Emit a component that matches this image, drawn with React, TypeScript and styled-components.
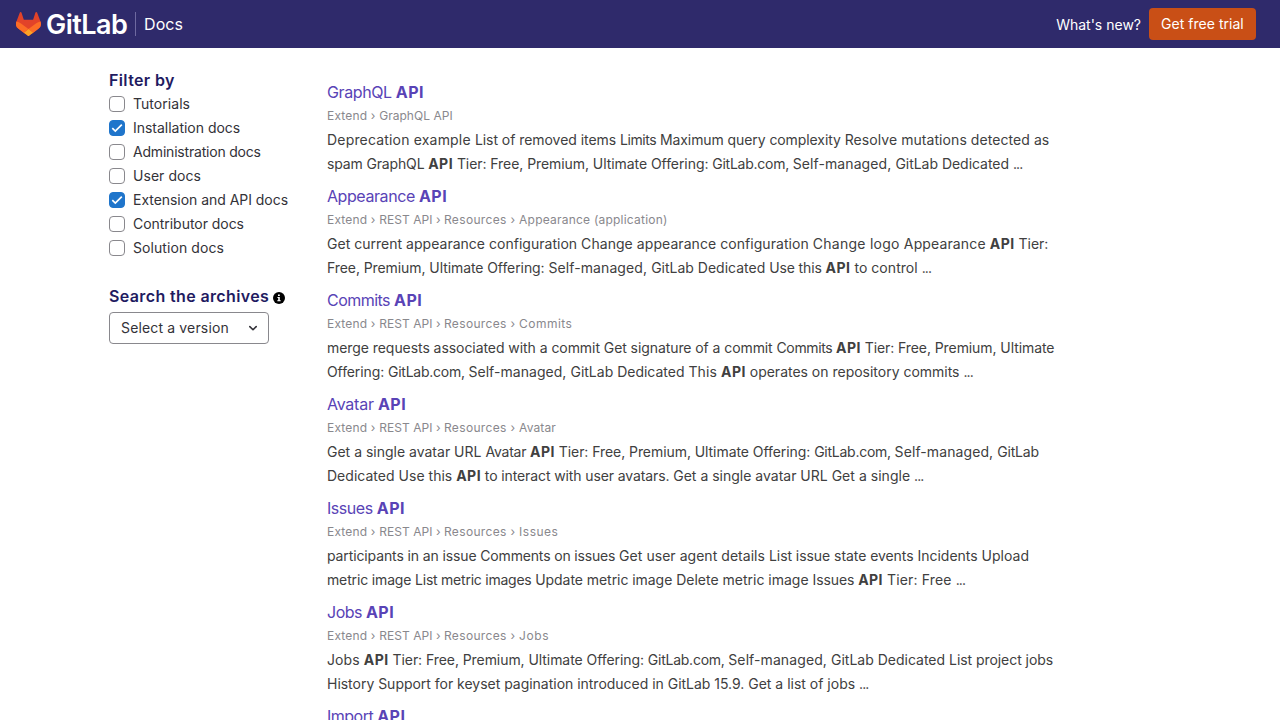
import React, { useState } from "react";
import styled, { createGlobalStyle } from "styled-components";

const GlobalStyle = createGlobalStyle`
  *, *::before, *::after { box-sizing: border-box; }
  html, body { margin: 0; height: 100%; overflow: hidden; }
  body {
    background: #fff;
    color: #333238;
    font-family: Inter, "Noto Sans", sans-serif;
    font-size: 14px;
    line-height: 24px;
  }
`;

const Header = styled.header`
  display: flex;
  align-items: center;
  justify-content: space-between;
  height: 48px;
  padding: 0 24px 0 16px;
  background: #2f2a6b;
  color: #fff;
`;

const Brand = styled.a`
  display: flex;
  align-items: center;
  height: 24px;
  color: #fff;
  text-decoration: none;
`;

const Wordmark = styled.span`
  width: 84px;
  margin: 2px 0 0 5px;
  font-size: 27px;
  font-weight: 600;
  letter-spacing: -0.55px;
  line-height: 24px;
  white-space: nowrap;
`;

const SiteName = styled.span`
  height: 24px;
  margin-left: 5px;
  padding-left: 8px;
  border-left: 1px solid #6e69a0;
  font-size: 16px;
  letter-spacing: 0.1px;
`;

const HeaderNav = styled.nav`
  display: flex;
  align-items: center;
  gap: 8px;
`;

const NavLink = styled.a`
  padding-top: 1px;
  color: #fff;
  text-decoration: none;
`;

const TrialButton = styled.a`
  width: 107px;
  height: 32px;
  padding: 4px 0 4px 12px;
  border-radius: 4px;
  background: #c94f16;
  color: #fff;
  letter-spacing: 0.03px;
  text-decoration: none;
  white-space: nowrap;
`;

const Page = styled.div`
  display: flex;
  padding: 20px 109px 0;
`;

const Sidebar = styled.aside`
  flex: 0 0 218px;
`;

const SidebarHeading = styled.h2`
  display: flex;
  align-items: center;
  gap: 4px;
  margin: 0;
  color: #1f1b61;
  font-size: 16px;
  font-weight: 600;
  letter-spacing: 0.37px;
  line-height: 24px;
`;

const FilterList = styled.div`
  margin-bottom: 24px;
`;

const FilterLabel = styled.label<{ $tracking: number }>`
  display: flex;
  align-items: center;
  gap: 8px;
  height: 24px;
  letter-spacing: ${(p) => p.$tracking}px;
  white-space: nowrap;
`;

const HiddenInput = styled.input`
  position: absolute;
  opacity: 0;
  width: 0;
  height: 0;
  margin: 0;
`;

const CheckBox = styled.span<{ $checked: boolean }>`
  display: flex;
  align-items: center;
  justify-content: center;
  width: 16px;
  height: 16px;
  border: 1px solid ${(p) => (p.$checked ? "#1f75cb" : "#89888d")};
  border-radius: 4px;
  background: ${(p) => (p.$checked ? "#1f75cb" : "#fff")};
`;

const InfoIcon = styled.svg`
  margin-top: 4px;
`;

const VersionButton = styled.button`
  display: flex;
  align-items: center;
  justify-content: space-between;
  width: 160px;
  height: 32px;
  margin-top: 4px;
  padding: 0 7px 0 11px;
  border: 1px solid #89888d;
  border-radius: 4px;
  background: #fff;
  color: #333238;
  font: inherit;
  letter-spacing: 0.15px;
`;

const Results = styled.ul`
  flex: 0 0 735px;
  margin: 0;
  padding: 12px 0 0;
  list-style: none;
`;

const Result = styled.li`
  height: 96px;
  margin-bottom: 8px;
`;

const ResultLink = styled.a`
  display: block;
  color: #5943b6;
  font-size: 16px;
  text-decoration: none;
  white-space: pre;
`;

const Breadcrumb = styled.div`
  color: #89888d;
  font-size: 12px;
  white-space: pre;
`;

const Snippet = styled.p`
  margin: 0;
  color: #404040;
`;

const Line = styled.span`
  display: block;
  white-space: pre;
`;

const Run = styled.span<{ $tracking: number }>`
  letter-spacing: ${(p) => p.$tracking}px;
`;

const Match = styled.strong`
  font-weight: 700;
  letter-spacing: 0.45px;
`;

const Tanuki = () => (
  <svg width="25" height="24" viewBox="0 0 25 24" aria-hidden="true">
    <path fill="#E24329" d="m24.507 9.5-.034-.09L21.082.562a.896.896 0 0 0-1.694.091l-2.29 7.01H7.825L5.535.653a.898.898 0 0 0-1.694-.09L.451 9.411.416 9.5a6.297 6.297 0 0 0 2.09 7.278l.012.01.03.022 5.16 3.867 2.56 1.935 1.554 1.176a1.051 1.051 0 0 0 1.268 0l1.555-1.176 2.56-1.935 5.197-3.89.014-.01A6.297 6.297 0 0 0 24.507 9.5Z" />
    <path fill="#FC6D26" d="m24.507 9.5-.034-.09a11.44 11.44 0 0 0-4.56 2.051l-7.447 5.632 4.742 3.584 5.197-3.89.014-.01A6.297 6.297 0 0 0 24.507 9.5Z" />
    <path fill="#FCA326" d="m7.707 20.677 2.56 1.935 1.555 1.176a1.051 1.051 0 0 0 1.268 0l1.555-1.176 2.56-1.935-4.743-3.584-4.755 3.584Z" />
    <path fill="#FC6D26" d="M5.01 11.461a11.43 11.43 0 0 0-4.56-2.05L.416 9.5a6.297 6.297 0 0 0 2.09 7.278l.012.01.03.022 5.16 3.867 4.745-3.584-7.444-5.632Z" />
  </svg>
);

// A stretch of text with its tracking in pixels; a bare string is a search match.
type Piece = [string, number] | string;

const Pieces = ({ items }: { items: Piece[] }) => (
  <>
    {items.map((item, i) =>
      typeof item === "string" ? (
        <Match key={i}>{item}</Match>
      ) : (
        <Run key={i} $tracking={item[1]}>
          {item[0]}
        </Run>
      )
    )}
  </>
);

const filters: { name: string; tracking: number }[] = [
  { name: "Tutorials", tracking: 0.04 },
  { name: "Installation docs", tracking: -0.02 },
  { name: "Administration docs", tracking: -0.2 },
  { name: "User docs", tracking: 0.05 },
  { name: "Extension and API docs", tracking: -0.04 },
  { name: "Contributor docs", tracking: -0.04 },
  { name: "Solution docs", tracking: 0.08 },
];

const ellipsis: Piece = ["...", -0.9];
const tiers: Piece = [" Tier: Free, Premium, Ultimate Offering: ", -0.065];
const hosted: Piece = ["GitLab.com, ", -0.25];
const selfManaged: Piece = ["Self-managed, ", 0.1];
const restPath: Piece[] = [
  ["Extend › ", 0.17],
  ["REST API › ", 0.05],
  ["Resources › ", 0.34],
];

const results: { title: Piece[]; path: Piece[]; lines: Piece[][] }[] = [
  {
    title: [["GraphQL ", -0.4], "API"],
    path: [["Extend › ", 0.17], ["GraphQL API", 0.04]],
    lines: [
      [
        ["Deprecation example ", 0.18],
        ["List of removed items ", -0.05],
        ["Limits ", -0.4],
        ["Maximum query complexity ", -0.08],
        ["Resolve mutations detected as", 0.07],
      ],
      [["spam GraphQL ", -0.15], "API", tiers, hosted, selfManaged, ["GitLab Dedicated ", -0.03], ellipsis],
    ],
  },
  {
    title: [["Appearance ", -0.42], "API"],
    path: [...restPath, ["Appearance (application)", 0.22]],
    lines: [
      [
        ["Get current appearance configuration ", 0.02],
        ["Change appearance configuration ", 0.06],
        ["Change logo ", 0.25],
        ["Appearance ", 0.13],
        "API",
        [" Tier:", 0],
      ],
      [
        ["Free, Premium, Ultimate Offering: ", -0.08],
        selfManaged,
        ["GitLab Dedicated ", 0],
        ["Use this ", -0.12],
        "API",
        [" to control ", 0.05],
        ellipsis,
      ],
    ],
  },
  {
    title: [["Commits ", -0.53], "API"],
    path: [...restPath, ["Commits", 0.45]],
    lines: [
      [
        ["merge requests associated with a commit ", -0.06],
        ["Get signature of a commit ", -0.08],
        ["Commits ", -0.35],
        "API",
        [" Tier: Free, Premium, Ultimate", -0.08],
      ],
      [
        ["Offering: ", -0.1],
        hosted,
        ["Self-managed, ", 0.05],
        ["GitLab Dedicated ", 0],
        ["This ", 0.1],
        "API",
        [" operates on repository commits ", -0.01],
        ellipsis,
      ],
    ],
  },
  {
    title: [["Avatar ", -0.25], "API"],
    path: [...restPath, ["Avatar", 0.1]],
    lines: [
      [["Get a single avatar URL ", 0], ["Avatar ", -0.2], "API", tiers, hosted, selfManaged, ["GitLab", -0.2]],
      [
        ["Dedicated Use this ", 0.02],
        "API",
        [" to interact with user avatars. ", -0.11],
        ["Get a single avatar URL ", 0],
        ["Get a single ", 0.03],
        ellipsis,
      ],
    ],
  },
  {
    title: [["Issues ", -0.45], "API"],
    path: [...restPath, ["Issues", 0.5]],
    lines: [
      [
        ["participants in an issue ", -0.12],
        ["Comments on issues ", -0.16],
        ["Get user agent details ", 0.04],
        ["List issue state events ", -0.06],
        ["Incidents Upload", 0],
      ],
      [
        ["metric image ", -0.15],
        ["List metric images ", -0.24],
        ["Update metric image ", -0.05],
        ["Delete metric image ", 0],
        ["Issues ", -0.1],
        "API",
        [" Tier: Free ", 0.15],
        ellipsis,
      ],
    ],
  },
  {
    title: [["Jobs ", -0.5], "API"],
    path: [...restPath, ["Jobs", 0.6]],
    lines: [
      [
        ["Jobs ", 0.1],
        "API",
        tiers,
        hosted,
        selfManaged,
        ["GitLab Dedicated ", 0],
        ["List project jobs", -0.06],
      ],
      [["History Support for keyset pagination introduced in GitLab 15.9. ", -0.02], ["Get a list of jobs ", 0], ellipsis],
    ],
  },
  { title: [["Import ", -0.5], "API"], path: [], lines: [] },
];

export default function App() {
  const [selected, setSelected] = useState(["Installation docs", "Extension and API docs"]);
  const toggle = (name: string) =>
    setSelected((s) => (s.includes(name) ? s.filter((n) => n !== name) : [...s, name]));

  return (
    <>
      <GlobalStyle />
      <Header>
        <Brand href="#">
          <Tanuki />
          <Wordmark>GitLab</Wordmark>
          <SiteName>Docs</SiteName>
        </Brand>
        <HeaderNav>
          <NavLink href="#">What's new?</NavLink>
          <TrialButton href="#">Get free trial</TrialButton>
        </HeaderNav>
      </Header>
      <Page>
        <Sidebar>
          <SidebarHeading>Filter by</SidebarHeading>
          <FilterList>
            {filters.map(({ name, tracking }) => {
              const checked = selected.includes(name);
              return (
                <FilterLabel key={name} $tracking={tracking}>
                  <HiddenInput type="checkbox" checked={checked} onChange={() => toggle(name)} />
                  <CheckBox $checked={checked}>
                    {checked && (
                      <svg width="12" height="10" viewBox="0 0 12 10" fill="none">
                        <path d="M1.3 5.2 4.3 8.1 10.8 1.6" stroke="#fff" strokeWidth="1.7" />
                      </svg>
                    )}
                  </CheckBox>
                  {name}
                </FilterLabel>
              );
            })}
          </FilterList>
          <SidebarHeading>
            Search the archives
            <InfoIcon width="12" height="12" viewBox="0 0 12 12">
              <circle cx="6" cy="6" r="6" fill="#000" />
              <path d="M5 2.6h1.8v1.5H5zM4.4 5h2.4v3.3h.9v1H4.3v-1h.9V6h-.8z" fill="#fff" />
            </InfoIcon>
          </SidebarHeading>
          <VersionButton>
            Select a version
            <svg width="16" height="16" viewBox="0 0 16 16" fill="none">
              <path d="m4.8 6.6 3.2 3.1 3.2-3.1" stroke="#333238" strokeWidth="1.6" strokeLinecap="round" strokeLinejoin="round" />
            </svg>
          </VersionButton>
        </Sidebar>
        <Results>
          {results.map((r, i) => (
            <Result key={i}>
              <ResultLink href="#">
                <Pieces items={r.title} />
              </ResultLink>
              <Breadcrumb>
                <Pieces items={r.path} />
              </Breadcrumb>
              <Snippet>
                {r.lines.map((line, n) => (
                  <Line key={n}>
                    <Pieces items={line} />
                  </Line>
                ))}
              </Snippet>
            </Result>
          ))}
        </Results>
      </Page>
    </>
  );
}
